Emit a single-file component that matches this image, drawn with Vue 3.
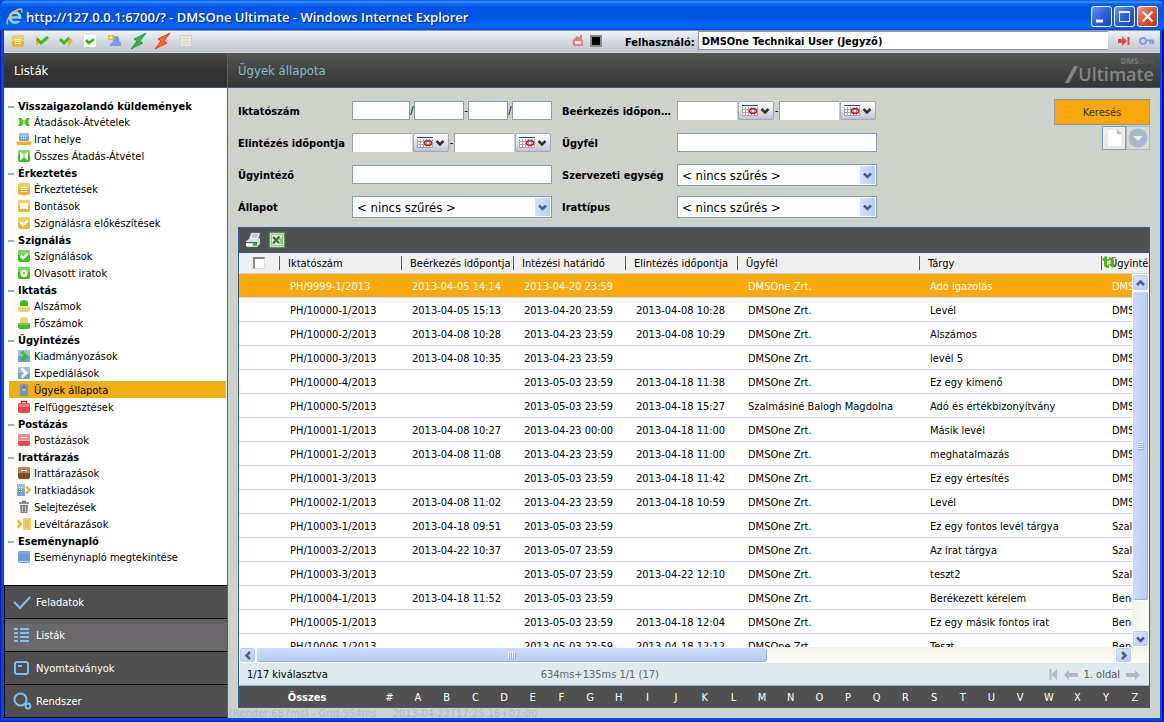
<script setup>
import { ref } from 'vue'

const yellowBox = '<rect x="0" y="0" width="12" height="12" rx="2" fill="#e9b62c"/><path d="M0 6V2q0-2 2-2h8q2 0 2 2v4z" fill="#f3cf6a"/>'
const greenBox = '<rect x="0" y="0" width="12" height="12" rx="2" fill="#3cbf17"/><path d="M0 5V2q0-2 2-2h8q2 0 2 2v3z" fill="#7ed765"/>'
const blueBox = '<rect x="0" y="0" width="12" height="12" rx="1" fill="#6f9bd8"/><path d="M0 6V1q0-1 1-1h10q1 0 1 1v5z" fill="#a3bfe6"/>'

const icons = {
  transfer: '<path d="M0 2h3l3 3v2l-3 3H0l2-4zM12 2H9L6 5v2l3 3h3l-2-4z" fill="#3fc414"/><path d="M5.500 5h1v2h-1z" fill="#fff"/>',
  laptop: '<path d="M1 0h10v8H1z" fill="#7ea3dd"/><path d="M1 0h10v3H1z" fill="#9dbbe8"/><path d="M3 3h1v1H3zm2 0h1v1H5zm2 0h1v1H7zM3 5h1v1H3zm2 0h1v1H5zm2 0h1v1H7z" fill="#fff"/><path d="M-1.500 8.500h15V10l-1 2h-13l-1-2z" fill="#f0b323"/>',
  transferBox: greenBox + '<path d="M2 2h1l3 3v2l-3 3H2zM10 2H9L6 5v2l3 3h1z" fill="#fff"/><path d="M5.500 5h1v2h-1z" fill="#3cbf17"/>',
  note: yellowBox + '<path d="M3 4.500h6M3 6.500h6M3 8.500h6" stroke="#fff3cc"/>',
  open: yellowBox + '<path d="M2 3h8v6H2z" fill="#fffdf5"/>',
  check: yellowBox + '<path d="M2.500 5.500L5 8l4.500-4" fill="none" stroke="#fff" stroke-width="2.500"/>',
  greenCheck: greenBox + '<path d="M2.500 5.500L5 8l4.500-4" fill="none" stroke="#fff" stroke-width="2.500"/>',
  eye: greenBox + '<circle cx="6" cy="6.500" r="3.500" fill="#fff"/><circle cx="6" cy="6" r="1" fill="#3cbf17"/>',
  subNumber: '<path d="M2 6V3q0-3 4-3t4 3v3z" fill="#46bd1f"/><path d="M0 6h12v4q0 2-2 2H2q-2 0-2-2z" fill="#ecd07b"/><path d="M0 6h12v2H0z" fill="#f4dfa0"/>',
  mainNumber: '<path d="M2 6V3q0-3 4-3t4 3v3z" fill="#ecd07b"/><path d="M0 6h12v4q0 2-2 2H2q-2 0-2-2z" fill="#3cc414"/><path d="M0 6h12v2H0z" fill="#6ad04e"/>',
  arrowGreen: blueBox + '<path d="M3.500 1.500L8 6l-4.500 4.500" fill="none" stroke="#35c40e" stroke-width="3"/>',
  arrowWhite: blueBox + '<path d="M3.500 1.500L8 6l-4.500 4.500" fill="none" stroke="#fff" stroke-width="3"/>',
  traffic: '<rect x="2" y="0" width="8" height="12" rx="1.500" fill="#6796d6"/><path d="M5 2h2v2H5z" fill="#e5483d"/><path d="M5 5h2v2H5z" fill="#f3c53c"/><path d="M5 8h2v2H5z" fill="#44c81c"/>',
  caseRed: '<path d="M3.500 3V.5h5V3" fill="none" stroke="#a13a3a" stroke-width="1.500"/><rect x="0" y="2" width="12" height="10" rx="2" fill="#e8484a"/><path d="M1 3h10v3H1z" fill="#f08182"/>',
  post: '<rect x="0" y="0" width="12" height="12" rx="2" fill="#e8484a"/><path d="M0 6V2q0-2 2-2h8q2 0 2 2v4z" fill="#f08f90"/><path d="M3 3.500h6" stroke="#fff"/><path d="M0 6.500h12" stroke="#f9c2c2"/>',
  archive: '<rect x="0" y="0" width="12" height="12" rx="2" fill="#8f461c"/><path d="M0 6V2q0-2 2-2h8q2 0 2 2v4z" fill="#bd8361"/><path d="M3 3.500h6" stroke="#fff"/>',
  issue: '<path d="M-1 0h8v12h-8z" fill="#779fdc"/><path d="M-1 0h8v5h-8z" fill="#9dbae8"/><path d="M1 3h1v1H1zm2 0h1v1H3zM1 5h1v1H1zm2 0h1v1H3zM1 7h1v1H1zm2 0h1v1H3z" fill="#fff"/><path d="M8 2.500L11.500 6 8 9.500" fill="none" stroke="#f0b623" stroke-width="2.500"/>',
  trash: '<path d="M1 2h10M4 .500h4" stroke="#777" stroke-width="1.500"/><path d="M2 4h8l-.500 8h-7z" fill="#848484"/><path d="M4.500 5v6M7.500 5v6" stroke="#c5c5c5"/>',
  depot: '<path d="M-.500 2.500L3 6l-3.500 3.500" fill="none" stroke="#f0b623" stroke-width="2.500"/><rect x="5" y="0" width="8" height="12" rx="1" fill="#f4ce60"/><path d="M7.500 3h3v2h-3zM7.500 7h3v2h-3z" fill="#fbe8b0" stroke="#d79f1d" stroke-width=".700"/>',
  log: '<path d="M0 2q0-2 2-2h10v12H2q-2 0-2-2z" fill="#6d9adb"/><path d="M1 10.500h11" stroke="#c9daf3"/><path d="M2 0h10v3H0V2z" fill="#7ca4df"/>',
  tbNote: yellowBox + '<path d="M3 4.500h6M3 6.500h6M3 8.500h6" stroke="#fff3cc"/>',
  tbCheckLeft: '<path d="M0 1l5 5-5 5z" fill="#eeb233"/><path d="M1 4l4 4 7-6" fill="none" stroke="#43b91c" stroke-width="3"/>',
  tbCheckRight: '<path d="M8 1l5 5-5 5z" fill="#eeb233"/><path d="M0 4l4 4 5-5" fill="none" stroke="#43b91c" stroke-width="3"/>',
  tbCheckBox: '<rect width="12" height="12" rx="1" fill="#fff"/><path d="M2 5l3 3 5-4" fill="none" stroke="#35b51b" stroke-width="2.500"/>',
  tbPerson: '<path d="M2 11q0-3 3-4-1-6 3-6t3 5q3 1 2 5z" fill="#789fdc"/><rect x="0" y="0" width="6" height="5" fill="#efb935"/><path d="M3 1v3M1.500 2.500h3" stroke="#fff"/>',
  tbGreenBolt: '<path d="M14-2L2 4l3 2-6 8L11 8 8 6z" fill="#2db73c" stroke="#158d28" stroke-width=".700"/>',
  tbRedBolt: '<path d="M14-2L2 4l3 2-6 8L11 8 8 6z" fill="#fb6a1d" stroke="#ef2b1c" stroke-width=".900"/>',
  tbDisabled: '<rect x=".500" y=".500" width="11" height="11" fill="#eae6da" stroke="#d3d0c8"/><path d="M3 3.500h6M3 6.500h6M3 9h6" stroke="#d4d1c9"/>',
}

const tools = [
  ['tbNote', 'Érkeztetés'], ['tbCheckLeft', 'Átvétel'], ['tbCheckRight', 'Átadás'], ['tbCheckBox', 'Jóváhagyás'],
  ['tbPerson', 'Új ügyfél'], ['tbGreenBolt', 'Indítás'], ['tbRedBolt', 'Leállítás'], ['tbDisabled', 'Jegyzet'],
]

const groups = [
  { title: 'Visszaigazolandó küldemények', items: [['transfer', 'Átadások-Átvételek'], ['laptop', 'Irat helye'], ['transferBox', 'Összes Átadás-Átvétel']] },
  { title: 'Érkeztetés', items: [['note', 'Érkeztetések'], ['open', 'Bontások'], ['check', 'Szignálásra előkészítések']] },
  { title: 'Szignálás', items: [['greenCheck', 'Szignálások'], ['eye', 'Olvasott iratok']] },
  { title: 'Iktatás', items: [['subNumber', 'Alszámok'], ['mainNumber', 'Főszámok']] },
  { title: 'Ügyintézés', items: [['arrowGreen', 'Kiadmányozások'], ['arrowWhite', 'Expediálások'], ['traffic', 'Ügyek állapota'], ['caseRed', 'Felfüggesztések']] },
  { title: 'Postázás', items: [['post', 'Postázások']] },
  { title: 'Irattárazás', items: [['archive', 'Irattárazások'], ['issue', 'Iratkiadások'], ['trash', 'Selejtezések'], ['depot', 'Levéltárazások']] },
  { title: 'Eseménynapló', items: [['log', 'Eseménynapló megtekintése']] },
]
const current = ref('Ügyek állapota')

const sections = [
  { label: 'Feladatok', art: '<path d="M1 9l6 6L17 4" fill="none" stroke="#74c2f8" stroke-width="2"/>' },
  { label: 'Listák', art: '<path d="M1 3h4m2 0h9M1 7h4m2 0h9M1 11h4m2 0h9M1 15h4m2 0h9" stroke="#74c2f8" stroke-width="2"/>' },
  { label: 'Nyomtatványok', art: '<rect x="2" y="3" width="13" height="12" rx="2" fill="none" stroke="#74c2f8" stroke-width="2"/><path d="M5 7h4" stroke="#74c2f8" stroke-width="2"/>' },
  { label: 'Rendszer', art: '<circle cx="7.500" cy="7.500" r="6" fill="none" stroke="#74c2f8" stroke-width="2"/><circle cx="15" cy="14" r="2.500" fill="none" stroke="#74c2f8" stroke-width="1.800"/>' },
]
const section = ref('Listák')

const columns = ['Iktatószám', 'Beérkezés időpontja', 'Intézési határidő', 'Elintézés időpontja', 'Ügyfél', 'Tárgy', 'Ügyintéző']
const D = 'DMSOne Zrt.'
const rows = [
  ['PH/9999-1/2013', '2013-04-05 14:14', '2013-04-20 23:59', '', D, 'Adó igazolás', 'DMSOne'],
  ['PH/10000-1/2013', '2013-04-05 15:13', '2013-04-20 23:59', '2013-04-08 10:28', D, 'Levél', 'DMSOne'],
  ['PH/10000-2/2013', '2013-04-08 10:28', '2013-04-23 23:59', '2013-04-08 10:29', D, 'Alszámos', 'DMSOne'],
  ['PH/10000-3/2013', '2013-04-08 10:35', '2013-04-23 23:59', '', D, 'levél 5', 'DMSOne'],
  ['PH/10000-4/2013', '', '2013-05-03 23:59', '2013-04-18 11:38', D, 'Ez egy kimenő', 'DMSOne'],
  ['PH/10000-5/2013', '', '2013-05-03 23:59', '2013-04-18 15:27', 'Szalmásiné Balogh Magdolna', 'Adó és értékbizonyítvány', 'DMSOne'],
  ['PH/10001-1/2013', '2013-04-08 10:27', '2013-04-23 00:00', '2013-04-18 11:00', D, 'Másik levél', 'DMSOne'],
  ['PH/10001-2/2013', '2013-04-08 11:08', '2013-04-23 23:59', '2013-04-18 11:00', D, 'meghatalmazás', 'DMSOne'],
  ['PH/10001-3/2013', '', '2013-05-03 23:59', '2013-04-18 11:42', D, 'Ez egy értesítés', 'DMSOne'],
  ['PH/10002-1/2013', '2013-04-08 11:02', '2013-04-23 23:59', '2013-04-18 10:59', D, 'Levél', 'DMSOne'],
  ['PH/10003-1/2013', '2013-04-18 09:51', '2013-05-03 23:59', '', D, 'Ez egy fontos levél tárgya', 'Szalmásiné'],
  ['PH/10003-2/2013', '2013-04-22 10:37', '2013-05-07 23:59', '', D, 'Az irat tárgya', 'Szalmásiné'],
  ['PH/10003-3/2013', '', '2013-05-07 23:59', '2013-04-22 12:10', D, 'teszt2', 'Szalmásiné'],
  ['PH/10004-1/2013', '2013-04-18 11:52', '2013-05-03 23:59', '', D, 'Berékezett kérelem', 'Bende'],
  ['PH/10005-1/2013', '', '2013-05-03 23:59', '2013-04-18 12:04', D, 'Ez egy másik fontos irat', 'Bende'],
  ['PH/10006-1/2013', '', '2013-05-03 23:59', '2013-04-18 12:12', D, 'Teszt', 'Bende'],
]
const selected = ref(0)
const letters = '#ABCDEFGHIJKLMNOPQRSTUVWXYZ'.split('')

const calendar = '<path d="M0 0h16v11H0z" fill="#fff"/><path d="M0 4.500h16M0 7.500h16M0 10.500h16M.500 2v9M3.500 2v9M6.500 2v9M9.500 2v9M12.500 2v9M15.500 2v9" stroke="#a5a5ad"/><path d="M0 0h16v1H0z" fill="#23479b"/><ellipse cx="11" cy="6" rx="3.500" ry="2.500" fill="none" stroke="#d3151c" stroke-width="1.500"/><path d="M19.500 4l3.500 3.500L26.500 4" fill="none" stroke="#333" stroke-width="2.500"/>'
const chevron = '<path d="M1 1.500L4.500 5 8 1.500" fill="none" stroke="#4d6185" stroke-width="2.500"/>'
</script>

<template>
  <div class="window">
    <header class="titlebar">
      <svg class="ie" width="18" height="18" viewBox="0 0 18 18">
        <circle cx="9" cy="9.500" r="5" fill="none" stroke="#8fd0fa" stroke-width="3" />
        <path d="M5 9.500h9" stroke="#8fd0fa" stroke-width="2.500" />
        <path d="M11 11h5v2h-5z" fill="#0a5be6" />
        <path d="M1.500 16.500C-.500 13 5 4 12 1.500c4-1.200 4.500 0 3.500 3" fill="none" stroke="#f4c22e" stroke-width="1.500" />
      </svg>
      <h1>http://127.0.0.1:6700/? - DMSOne Ultimate - Windows Internet Explorer</h1>
      <button class="win" aria-label="Kis méret"><svg width="19" height="19"><path d="M4 14h7" stroke="#fff" stroke-width="3" /></svg></button>
      <button class="win" aria-label="Teljes méret"><svg width="19" height="19"><path d="M4.500 4.500h10v10h-10z" fill="none" stroke="#fff" /><path d="M4 5h11" stroke="#fff" stroke-width="2" /></svg></button>
      <button class="win close" aria-label="Bezárás"><svg width="19" height="19"><path d="M4.500 4.500l10 10M14.500 4.500l-10 10" stroke="#fff" stroke-width="2.300" /></svg></button>
    </header>

    <div class="toolbar">
      <div class="tools">
        <button v-for="t in tools" :key="t[0]" :aria-label="t[1]"><svg width="14" height="14" viewBox="-1 -1 14 14" v-html="icons[t[0]]" /></button>
      </div>
      <div class="user">
        <button aria-label="Kezdőlap">
          <svg width="12" height="12"><path d="M0 6l5-5 3 2V0h2v4l1 2v5H1V6z" fill="#e97a7a" /><path d="M3 6h6v3H3z" fill="#fbeaea" /></svg>
        </button>
        <button class="stop" aria-label="Leállítás"></button>
        <label for="user">Felhasználó:</label>
        <input id="user" value="DMSOne Technikai User (Jegyző)">
        <button class="exit" aria-label="Kilépés">
          <svg width="12" height="10"><path d="M0 3h4V0l5 5-5 5V7H0z" fill="#e5484a" /><path d="M10.500 1v8" stroke="#e5484a" stroke-width="2" /></svg>
        </button>
        <button class="key" aria-label="Jelszó">
          <svg width="16" height="10"><circle cx="4" cy="5" r="3" fill="none" stroke="#7ba2df" stroke-width="2" /><path d="M7 4.500h8M11.500 5v3M14 5v3" stroke="#7ba2df" stroke-width="2" /></svg>
        </button>
      </div>
    </div>

    <div class="content">
      <aside>
        <h2 class="bar">Listák</h2>
        <nav class="tree">
          <section v-for="g in groups" :key="g.title">
            <h3>{{ g.title }}</h3>
            <a v-for="i in g.items" :key="i[1]" href="#" :class="{ on: i[1] === current }" @click.prevent="current = i[1]">
              <svg width="16" height="14" viewBox="-2 -1 16 14" v-html="icons[i[0]]" />{{ i[1] }}
            </a>
          </section>
        </nav>
        <nav class="sections">
          <button v-for="s in sections" :key="s.label" :class="{ on: s.label === section }" @click="section = s.label">
            <svg width="19" height="18" v-html="s.art" />{{ s.label }}
          </button>
        </nav>
      </aside>

      <main>
        <div class="bar page">
          <h2>Ügyek állapota</h2>
          <div class="logo">
            <small><b>DMS</b>One</small>
            <span><svg width="13" height="17"><path d="M0 17L9 0h4L4 17z" fill="#838584" /></svg>Ultimate</span>
          </div>
        </div>

        <form class="filters" @submit.prevent>
          <div class="fields">
            <label for="num">Iktatószám</label>
            <div class="number">
              <input id="num" class="w58"><i>/</i><input class="w50" aria-label="Főszám"><i>-</i><input class="w40" aria-label="Alszám"><i>/</i><input class="w40" aria-label="Év">
            </div>
            <label for="arr">Beérkezés időpontja</label>
            <div class="dates">
              <input id="arr"><button aria-label="Naptár"><svg width="28" height="11" v-html="calendar" /></button><i>-</i>
              <input aria-label="Beérkezés vége"><button aria-label="Naptár"><svg width="28" height="11" v-html="calendar" /></button>
            </div>
            <label for="done">Elintézés időpontja</label>
            <div class="dates">
              <input id="done"><button aria-label="Naptár"><svg width="28" height="11" v-html="calendar" /></button><i>-</i>
              <input aria-label="Elintézés vége"><button aria-label="Naptár"><svg width="28" height="11" v-html="calendar" /></button>
            </div>
            <label for="client">Ügyfél</label><input id="client">
            <label for="clerk">Ügyintéző</label><input id="clerk">
            <label for="unit">Szervezeti egység</label>
            <div class="pick"><select id="unit"><option>&lt; nincs szűrés &gt;</option></select><svg width="15" height="18" viewBox="-3 -6 15 18" v-html="chevron" /></div>
            <label for="state">Állapot</label>
            <div class="pick"><select id="state"><option>&lt; nincs szűrés &gt;</option></select><svg width="15" height="18" viewBox="-3 -6 15 18" v-html="chevron" /></div>
            <label for="type">Irattípus</label>
            <div class="pick"><select id="type"><option>&lt; nincs szűrés &gt;</option></select><svg width="15" height="18" viewBox="-3 -6 15 18" v-html="chevron" /></div>
          </div>
          <div class="actions">
            <button class="search">Keresés</button>
            <button class="mini" aria-label="Új"><svg width="16" height="20"><path d="M1 1h10l5 5v13H1z" fill="#fff" stroke="#dcdce4" /><path d="M11 1v5h5z" fill="#b9bcc4" /></svg></button>
            <button class="mini off" aria-label="Továbbiak"><svg width="20" height="20"><circle cx="10" cy="10" r="9.500" fill="#a5b8cd" /><path d="M5 8h10l-5 5z" fill="#eeeade" /></svg></button>
          </div>
        </form>

        <div class="grid">
          <div class="gridtools">
            <button aria-label="Nyomtatás">
              <svg width="16" height="15"><path d="M6 0h9l-2 7H4z" fill="#f4f6fa" stroke="#8fa0b8" stroke-width=".600" /><path d="M7 2h6M6.500 4h6" stroke="#7187ad" stroke-width=".800" /><path d="M1 8l3-2h9l2-1v6l-3 3H2l-1-1z" fill="#d5dce5" /><path d="M1 9h11v1H1z" fill="#4c5866" /><path d="M8 10h4v3H8z" fill="#2ec32e" /><path d="M1 11h6v2H1z" fill="#fff" /></svg>
            </button>
            <button aria-label="Excel">
              <svg width="16" height="16"><path d="M.500.500h15v15H.500z" fill="#f6fbf5" stroke="#4d9848" stroke-width="1.500" /><path d="M2.500 2.500h11v11h-11z" fill="#e3f0e1" stroke="#8fc08b" /><path d="M4 5l6 6M10.500 4.500L4 11.500" stroke="#2c7a2c" stroke-width="2.200" /><path d="M10 7h3M11 9h2M10 11h3" stroke="#4d9848" /></svg>
            </button>
          </div>
          <div class="scroller">
            <table>
              <colgroup><col class="c0"><col class="c1"><col class="c2"><col class="c2"><col class="c2"><col class="c3"><col class="c3"><col></colgroup>
              <thead>
                <tr>
                  <th><input type="checkbox" aria-label="Összes kijelölése"></th>
                  <th v-for="(c, i) in columns" :key="c">
                    <span><svg v-if="i === 6" width="15" height="13"><path d="M0 4l3-4 2 1v2h2v2H5v4h2v3H5L2 10V5zM14 8l-3 4-5-4h3V4H7V1l4 1 1 2v4z" fill="#46bb1e" /></svg>{{ c }}</span>
                  </th>
                </tr>
              </thead>
              <tbody>
                <tr v-for="(r, i) in rows" :key="r[0]" :class="{ on: i === selected }" @click="selected = i">
                  <td></td><td v-for="(v, j) in r" :key="j">{{ v }}</td>
                </tr>
              </tbody>
            </table>
            <div class="vscroll">
              <button aria-label="Fel"><svg width="9" height="6"><path d="M1 5l3.500-3.500L8 5" fill="none" stroke="#4d6185" stroke-width="2.500" /></svg></button>
              <div class="thumb"><svg width="7" height="8"><path d="M0 .500h6M0 2.500h6M0 4.500h6M0 6.500h6" stroke="#eef4ff" /><path d="M1 1.500h6M1 3.500h6M1 5.500h6M1 7.500h6" stroke="#8cb0f8" /></svg></div>
              <span></span>
              <button aria-label="Le"><svg width="9" height="6" v-html="chevron" /></button>
            </div>
          </div>
          <div class="hscroll">
            <button aria-label="Balra"><svg width="6" height="9"><path d="M5 1L1.500 4.500 5 8" fill="none" stroke="#4d6185" stroke-width="2.500" /></svg></button>
            <div class="thumb"><svg width="8" height="7"><path d="M.500 0v6M2.500 0v6M4.500 0v6M6.500 0v6" stroke="#eef4ff" /><path d="M1.500 1v6M3.500 1v6M5.500 1v6M7.500 1v6" stroke="#8cb0f8" /></svg></div>
            <span></span>
            <button aria-label="Jobbra"><svg width="6" height="9"><path d="M1 1l3.500 3.500L1 8" fill="none" stroke="#4d6185" stroke-width="2.500" /></svg></button>
          </div>
          <div class="status">
            <span>1/17 kiválasztva</span>
            <span class="timing">634ms+135ms 1/1 (17)</span>
            <span class="pager">
              <button aria-label="Első oldal"><svg width="9" height="11"><path d="M1.500 0v11" stroke="#b5b8c4" stroke-width="2" /><path d="M8 0v11L2.500 5.500z" fill="#b5b8c4" /></svg></button>
              <button aria-label="Előző oldal"><svg width="14" height="10"><path d="M0 5l5-5v3h9v4H5v3z" fill="#b5b8c4" /></svg></button>
              1. oldal
              <button aria-label="Következő oldal"><svg width="14" height="10"><path d="M14 5L9 0v3H0v4h9v3z" fill="#b5b8c4" /></svg></button>
            </span>
          </div>
          <div class="letters">
            <button class="all">Összes</button>
            <button v-for="l in letters" :key="l">{{ l }}</button>
          </div>
        </div>
        <footer><span>(Render:687ms) - Grid:954ms</span><span>2013-04-22T17:25:16+02:00</span></footer>
      </main>
    </div>
  </div>
</template>

<style>
body { margin: 0; background: #0a3fd8; }
</style>

<style scoped>
* { box-sizing: border-box; }
.window {
  display: flex; flex-direction: column; height: 100vh; overflow: hidden;
  padding: 0 4px 4px; background: #0348e0; box-shadow: inset 1px -1px 0 #0019a8, inset -2px 0 0 #0019b0;
  border-radius: 7px 7px 0 0;
  font-family: "DejaVu Sans Condensed", "DejaVu Sans", Tahoma, sans-serif; font-size: 11px; line-height: 15px; color: #000;
}
button, input, select { font: inherit; color: inherit; margin: 0; padding: 0; }
button { display: flex; align-items: center; justify-content: center; background: none; border: 0; flex: none; }
svg { display: block; flex: none; overflow: visible; }
h1, h2, h3 { margin: 0; font-weight: normal; }
i { font-style: normal; }

.titlebar {
  flex: none; display: flex; align-items: center; gap: 2px; height: 30px; margin: 0 -4px; padding: 3px 6px 0;
  background: linear-gradient(#0a58e8 0, #3a94ff 2px, #0c62f0 4px, #0054e3 9px, #0055e6 18px, #0366ff 25px, #0060f4 28px, #0144c8 30px);
}
.titlebar h1 {
  flex: 1; color: #fff; font: 600 13px/18px "Open Sans", "Noto Sans", sans-serif; text-shadow: 1px 1px 1px #0a1f80;
  white-space: nowrap; overflow: hidden;
}
.win { width: 21px; height: 21px; border: 1px solid #fff; border-radius: 3px; background: linear-gradient(135deg, #6d98f4, #2a5fe0 50%, #1b46c4); }
.close { background: linear-gradient(135deg, #f09a80, #e0512b 50%, #c03a12); }

.toolbar {
  flex: none; display: grid; grid-template-columns: 564fr 592fr; height: 23px; border-top: 1px solid #909497; border-bottom: 1px solid #d5d9d4;
  background: linear-gradient(#eef2f5, #d4d8e2 50%, #c0c5cc);
}
.tools, .user { display: flex; align-items: center; padding-bottom: 1px; }
.tools { gap: 10px; padding-left: 7px; }
.user { padding-right: 5px; }
.user button:first-child { margin: 0 6px 0 4px; }
.stop { width: 12px; height: 12px; background: #000; border: 2px solid #888; }
.user label { margin: 2px 3px 0 23px; font-weight: bold; }
.user input { flex: 1; min-width: 0; height: 19px; margin-bottom: 1px; padding: 1px 3px 0; background: #fff; border: 1px solid #7f9db9; font-weight: bold; border-right: 0; }
.exit { margin-left: 10px; }
.key { margin-left: 9px; }

.content { flex: 1; min-height: 0; display: flex; background: #cdd2cb; }
aside { flex: none; width: 224px; display: flex; flex-direction: column; border-right: 1px solid #3f6298; background: #fff; }
.bar { flex: none; height: 35px; padding: 0 10px; font-size: 13px; line-height: 35px; color: #fff; background: linear-gradient(#4a4b49, #333432 50%, #303130); border-bottom: 1px solid #3f5578; }
.tree { flex: 1; min-height: 0; overflow: hidden; padding: 9px 1px 0 5px; }
.tree h3 { position: relative; height: 16px; padding: 2px 0 0 9px; font-size: 11px; font-weight: bold; line-height: 16px; white-space: nowrap; }
.tree h3::before { content: ""; position: absolute; left: -1px; top: 9px; width: 6px; height: 2px; background: #7db7e8; }
.tree a { display: flex; align-items: center; gap: 2px; height: 17px; padding: 2px 0 0 7px; color: #000; text-decoration: none; white-space: nowrap; }
.tree a svg { margin-bottom: 2px; }
.tree a.on { background: #f0b014; }
.sections { flex: none; padding-bottom: 1px; background: #000; border-left: 1px solid #000; }
.sections button { width: 100%; height: 32px; margin-top: 1px; padding-left: 8px; gap: 4px; justify-content: flex-start; background: #4f4f4f; color: #fff; }
.sections button.on { background: linear-gradient(#5f625f 0 5px, #6a686a 5px); }

main { flex: 1; min-width: 0; display: flex; flex-direction: column; }
.page { display: flex; justify-content: space-between; padding-right: 6px; background: linear-gradient(#555754, #434543 50%, #363736); }
.page h2 { font-size: 13px; line-height: 35px; color: #83bcca; }
.logo { display: flex; flex-direction: column; align-items: flex-end; padding-top: 4px; color: #838584; font-family: "Open Sans", "Noto Sans", sans-serif; }
.logo small { font-size: 8px; line-height: 8px; color: #5f6160; }
.logo small b { color: #777977; }
.logo span { display: flex; align-items: center; font-size: 18px; font-weight: 600; line-height: 18px; }

.filters { flex: none; display: flex; justify-content: space-between; padding: 7px 10px 4px; }
.fields { display: grid; grid-template-columns: 104px 200px 105px 200px; column-gap: 10px; grid-auto-rows: 32px; align-items: center; }
.fields label { font-weight: bold; white-space: nowrap; overflow: hidden; text-overflow: ellipsis; width: 110px; }
.filters input { height: 19px; min-width: 0; background: #fff; border: 1px solid #7f9db9; border-radius: 0; }
.fields > input { width: 100%; margin-bottom: 1px; }
.number, .dates { display: flex; align-items: center; width: 200px; margin-bottom: 1px; }
.number i, .dates i { width: 4px; text-align: center; line-height: 18px; }
.number .w58 { width: 58px; }
.number .w50 { width: 50px; }
.number .w40 { width: 40px; }
.dates input { width: 60px; border-width: 1px 0 0 1px; border-color: #a0a0a0; margin-right: 1px; }
.dates button { width: 36px; height: 19px; border: 1px solid #a5a5b5; border-radius: 2px; background: linear-gradient(#fff, #dcdce8 60%, #c2c2d6); }
.dates i { width: 5px; }
.pick { position: relative; }
.pick select { display: block; width: 100%; height: 22px; padding-left: 4px; appearance: none; background: #fff; border: 1px solid #7f9db9; border-radius: 0; font-size: 13px; }
.pick svg { position: absolute; top: 2px; right: 2px; background: linear-gradient(90deg, #d5e1fd, #b8cdf8); pointer-events: none; }
.actions { display: flex; flex-wrap: wrap; align-content: flex-start; justify-content: flex-end; width: 96px; padding-top: 4px; }
.search { width: 96px; height: 26px; background: #f9a90b; border: 1px solid #7f9db9; color: #333; }
.mini { width: 24px; height: 24px; margin-top: 1px; background: #f0ece0; border: 1px solid #7f9db9; }
.off { background: #dadad0; border-color: #a9bac8; }

.grid { flex: 1; min-height: 0; display: flex; flex-direction: column; margin: 0 10px; border: 1px solid #3b5a92; background: #fff; }
.gridtools { flex: none; display: flex; align-items: center; gap: 8px; height: 25px; padding-left: 6px; background: #505050; border-bottom: 1px solid #3b5a92; }
.scroller { position: relative; flex: 1; min-height: 0; overflow: hidden; }
table { width: 100%; table-layout: fixed; border-collapse: separate; border-spacing: 0; }
.c0 { width: 40px; }
.c1 { width: 122px; }
.c2 { width: 112px; }
.c3 { width: 182px; }
th, td { padding: 0; font-weight: normal; text-align: left; white-space: nowrap; overflow: hidden; }
th { height: 21px; background: #efefef; border-bottom: 1px solid #cad6e2; }
th input { appearance: none; display: block; width: 12px; height: 12px; margin: 0 auto; background: #fff; border: 1px solid #ddd; border-top: 2px solid #888; border-left: 2px solid #888; }
th span { position: relative; display: block; height: 14px; padding-left: 8px; border-left: 1px solid #3b5a92; line-height: 16px; }
th span svg { position: absolute; left: 0; top: 0; }
td { height: 24px; padding: 2px 0 0 11px; border-bottom: 1px solid #cad6e2; }
tr.on td { background: #f9a90b; color: #fff; }
.vscroll { position: absolute; top: 21px; right: 0; bottom: 0; width: 17px; display: flex; flex-direction: column; background: linear-gradient(90deg, #f3f1ea, #fefefb); }
.vscroll button, .hscroll button { width: 17px; height: 17px; border: 1px solid #fff; border-radius: 3px; background: linear-gradient(135deg, #dce7fe, #b6cafa); box-shadow: inset 0 0 0 1px #b8cbf6; }
.thumb { display: flex; align-items: center; justify-content: center; border: 1px solid #fff; border-radius: 3px; box-shadow: inset -1px -1px 0 #8fadec; }
.vscroll .thumb { flex: 311; background: linear-gradient(90deg, #cbdafe, #b8ccfa); }
.vscroll > span { flex: 29; }
.hscroll { flex: none; display: flex; height: 16px; padding-right: 17px; background: linear-gradient(#f3f1ea, #fefefb); }
.hscroll button { height: 16px; }
.hscroll .thumb { flex: 511; background: linear-gradient(#cbdafe, #b8ccfa); }
.hscroll > span { flex: 348; }
.status { flex: none; display: grid; grid-template-columns: 294fr 120fr 480fr; align-items: center; height: 23px; padding: 1px 9px 0 8px; background: #deeaee; border-bottom: 1px solid #9db4d6; }
.timing { white-space: nowrap; color: #666; }
.pager { display: flex; align-items: center; justify-content: flex-end; gap: 6px; color: #555; }
.letters { flex: none; display: flex; height: 21px; padding-top: 1px; background: #505050; color: #fff; }
.letters button { flex: 1; min-width: 0; }
.letters .all { flex: 0 0 136px; font-weight: bold; }
footer { flex: none; display: flex; gap: 16px; height: 10px; padding-left: 1px; color: #aebac8; line-height: 11px; white-space: nowrap; }
</style>
